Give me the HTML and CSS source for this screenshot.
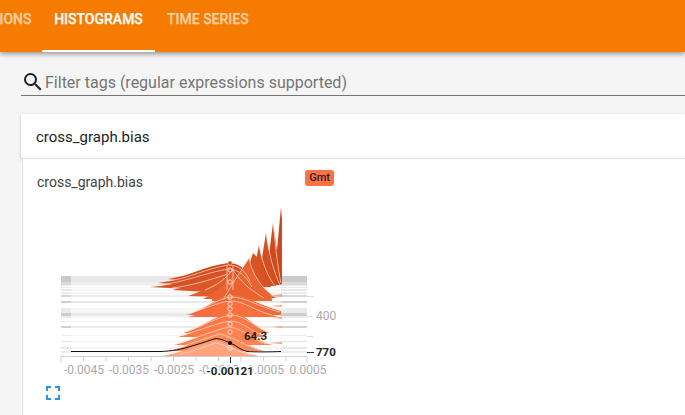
FILE: index.html
```html
<!DOCTYPE html>
<html lang="en">
<head>
<meta charset="utf-8">
<title>Histograms</title>
<link rel="stylesheet" href="styles.css">
</head>
<body>
<header class="topbar">
  <nav class="tabs">
    <span class="tab tab-cut">DISTRIBUTIONS</span>
    <span class="tab tab-active">HISTOGRAMS</span>
    <span class="tab">TIME SERIES</span>
  </nav>
</header>
<main class="content">
  <div class="search">
    <svg class="search-icon" viewBox="0 0 24 24" width="24" height="24"><path d="M15.5 14h-.79l-.28-.27A6.47 6.47 0 0 0 16 9.5 6.5 6.5 0 1 0 9.5 16c1.61 0 3.09-.59 4.23-1.57l.27.28v.79l5 4.99L20.49 19l-4.99-5zm-6 0C7.01 14 5 11.99 5 9.5S7.01 5 9.5 5 14 7.01 14 9.5 11.99 14 9.5 14z" fill="#212121"/></svg>
    <span class="search-text">Filter tags (regular expressions supported)</span>
  </div>
  <section class="category">
    <div class="category-head">cross_graph.bias</div>
    <div class="card">
      <div class="card-title">
        <span class="card-name">cross_graph.bias</span>
        <span class="badge">Gmt</span>
      </div>
      <svg class="chart" width="300" height="200" viewBox="40 200 300 200">
        <defs>
          <clipPath id="clip-mid"><rect x="71" y="270" width="210" height="90"/></clipPath>
          <clipPath id="clip-edge"><rect x="61" y="270" width="10" height="90"/><rect x="281" y="270" width="26" height="90"/></clipPath>
          <g id="rows">
            <rect x="61" y="276" width="246" height="6" opacity=".8"/>
            <rect x="61" y="282" width="246" height="3" opacity=".55"/>
            <rect x="61" y="285" width="246" height="1" opacity=".3"/>
            <rect x="61" y="287" width="246" height="1" opacity=".3"/>
            <rect x="61" y="289" width="246" height="2" opacity=".35"/>
            <rect x="61" y="292" width="246" height="2" opacity=".3"/>
            <rect x="61" y="295" width="246" height="2" opacity=".6"/>
            <rect x="61" y="301" width="246" height="2" opacity=".75"/>
            <rect x="61" y="308" width="246" height="5" opacity=".3"/>
            <rect x="61" y="313" width="246" height="3" opacity=".75"/>
            <rect x="61" y="316" width="246" height="2" opacity=".3"/>
            <rect x="61" y="321" width="246" height="1" opacity=".3"/>
            <rect x="61" y="326" width="246" height="2" opacity=".7"/>
            <rect x="61" y="335" width="246" height="1" opacity=".3"/>
            <rect x="61" y="341" width="246" height="1" opacity=".4"/>
            <rect x="61" y="347" width="246" height="2" opacity=".35"/>
            <rect x="61" y="351" width="246" height="2" opacity=".3"/>
          </g>
        </defs>
        <use href="#rows" class="rows-mid" clip-path="url(#clip-mid)"/>
        <use href="#rows" class="rows-edge" clip-path="url(#clip-edge)"/>
        <g class="ridges">
          <path fill="#cb481b" d="M274 284L277 250L281 207L282 220V284Z"/>
          <path fill="#cf4a1d" d="M265 285L269 255L273 223L277 250L281 285Z"/>
          <path fill="#d34e20" d="M257 286L262 258L266 233L270 258L276 286Z"/>
          <path fill="#d75123" d="M250 287L255 265L259 245L263 265L271 287Z"/>
          <path fill="#d95325" d="M244 287L249 265L253 253L258 258L266 287Z"/>
          <path fill="#d04a1c" d="M168 279C190 276 205 266 228 263C237 263 245 266 250 280L256 288L168 279Z"/>
          <path fill="#d34e20" d="M158 283C182 280 205 270 228 267C238 267 246 272 252 282L258 290L158 283Z"/>
          <path fill="#d75225" d="M150 287C178 285 205 275 229 271C238 272 248 280 256 288L262 293L150 287Z"/>
          <path fill="#dc5727" d="M172 290C200 285 220 278 233 272C242 278 250 285 262 295L172 290Z"/>
          <path fill="#e25c2b" d="M188 296C205 291 222 280 233 272C240 281 248 288 268 298L188 296Z"/>
          <path fill="#ea6431" d="M203 299C218 292 226 280 233 275C242 281 256 295 274 299Z"/>
          <path fill="#e9622f" d="M224 298L240 272L249 258C252 274 262 290 277 298Z"/>
          <path fill="#ed6735" d="M212 299H272V301H212Z"/>
          <path fill="#f26a39" d="M186 315C205 311 215 297 231 295C246 295 255 304 281 311V315Z"/>
          <path fill="#f86f3e" d="M188 317C208 312 218 302 231 300C246 300 256 311 278 317Z"/>
          <path fill="#fb7644" d="M183 333C202 328 214 315 232 313C246 313 254 328 270 333Z"/>
          <path fill="#fd7c4a" d="M178 337C200 332 214 321 230 319C244 319 252 332 268 337Z"/>
          <path fill="#ff8250" d="M174 345C195 341 213 328 230 325C244 326 252 340 272 345Z"/>
          <path fill="#ff8b5a" d="M168 351C190 347 203 336 220 332C234 334 245 346 264 351Z"/>
          <path fill="#ffa47c" d="M150 357C178 356 198 344 216 340C228 342 240 354 264 357Z"/>
          <path fill="#f9a184" d="M270 306L282 305V307ZM268 296L282 294V297ZM272 318L282 317V319ZM272 327L282 326V328ZM268 343L282 342V344Z"/>
        </g>
        <g class="ridge-lines">
          <path d="M168 281C190 278 205 269 228 265C238 265 245 270 250 281"/>
          <path d="M160 285C185 282 205 273 228 269C238 269 246 276 252 287"/>
          <path d="M172 288C190 286 210 280 228 274"/>
          <path d="M205 290C218 285 226 278 233 270C241 282 250 290 264 298"/>
          <path d="M224 298L240 272L249 258C252 274 262 290 277 298"/>
          <path d="M259 245C262 262 268 278 276 287M266 233C269 255 274 272 280 285M273 223C276 250 278 270 281 283"/>
          <path d="M192 312C208 307 218 299 231 297C246 297 256 306 280 312"/>
          <path d="M197 311C212 306 222 301 233 301C245 302 258 312 272 315"/>
          <path d="M188 331C204 326 216 317 232 315C246 316 254 327 268 332"/>
          <path d="M182 335C202 330 216 323 231 321C244 322 252 332 264 336"/>
          <path d="M178 343C197 338 214 330 230 327C243 329 252 339 266 344"/>
          <path d="M170 349C190 345 205 338 220 334C233 337 245 346 260 350"/>
          <path d="M180 354C196 351 206 346 216 343C226 345 238 352 252 355"/>
          <path d="M227 265V290M233 265V290"/>
        </g>
        <circle class="dot-top" cx="230" cy="263" r="2"/>
        <g class="dots">
          <circle cx="230" cy="270" r="2.2"/><circle cx="230" cy="282" r="2.2"/><circle cx="230" cy="297" r="2.2"/><circle cx="230" cy="304" r="2.2"/><circle cx="230" cy="309" r="2.2"/><circle cx="230" cy="315" r="2.2"/><circle cx="230" cy="324" r="2.2"/><circle cx="230" cy="332" r="2.2"/><circle cx="230" cy="348" r="2.2"/>
        </g>
        <path class="axis" d="M61 363V356.5H307V363M83.500 357v4M106 357v4M128.500 357v4M151 357v4M173.500 357v4M196 357v4M218.500 357v4M241 357v4M263.500 357v4M286 357v4"/>
        <path class="tick-mark" d="M307 296.500H314M307 316.500H313M307 336.500H313"/>
        <path class="tick-active" d="M307 352.500H314M230.500 357V363"/>
        <path class="hover-line" d="M71 351.500H160C172 351 180 350 195 345C203 343 210 340 216 338.500C222 339 226 341 230 343C236 345 240 350 247 351.500C255 352 270 352 281 351.500"/>
        <circle class="hover-dot" cx="230" cy="343" r="2"/>
        <text class="label" x="84" y="374" text-anchor="middle">-0.0045</text>
        <text class="label" x="129" y="374" text-anchor="middle">-0.0035</text>
        <text class="label" x="174" y="374" text-anchor="middle">-0.0025</text>
        <text class="label" x="219" y="374" text-anchor="middle">-0.0015</text>
        <text class="label" x="264" y="374" text-anchor="middle">-0.0005</text>
        <text class="label" x="308" y="374" text-anchor="middle">0.0005</text>
        <text class="label" x="316" y="320">400</text>
        <text class="hover hover-halo" x="230" y="375" text-anchor="middle">-0.00121</text>
        <text class="hover" x="244" y="340">64.3</text>
        <text class="hover" x="316" y="356">770</text>
      </svg>
      <svg class="expand" width="14" height="14" viewBox="0 0 14 14"><path d="M1 5V1H5M9 1H13V5M13 9V13H9M5 13H1V9" fill="none" stroke="#2196f3" stroke-width="2"/></svg>
    </div>
  </section>
</main>
</body>
</html>
```
FILE: styles.css
```css
html, body { margin: 0; padding: 0; height: 100%; overflow: hidden; background: #f5f5f5; font-family: Roboto, sans-serif; }
.topbar { height: 52px; background: #f57c00; box-shadow: 0 2px 5px rgba(0,0,0,.4); overflow: hidden; }
.tabs { display: flex; margin-left: -82px; height: 52px; }
.tab { box-sizing: border-box; height: 52px; padding: 0 12px; line-height: 38px; font-size: 14px; font-weight: 500; -webkit-text-stroke: .25px; color: rgba(255,255,255,.6); white-space: nowrap; width: 113px; text-align: center; }
.tab-cut { width: 124px; text-align: right; }
.tab-active { color: #fff; border-bottom: 2px solid #fff; }
.tab:last-child { width: auto; }
.content { padding: 17px 0 0 21px; }
.search { display: flex; align-items: center; height: 26px; border-bottom: 1px solid #757575; }
.search-icon { flex: none; width: 24px; height: 24px; }
.search-text { font-size: 16px; color: #757575; white-space: nowrap; }
.category { margin-top: 18px; background: #fff; }
.category-head { height: 44px; line-height: 46px; padding-left: 15px; font-size: 15px; color: #212121; background: #fff; box-shadow: 0 1px 3px rgba(0,0,0,.2); border-bottom: 1px solid #e0e0e0; }
.card { margin-left: 1px; height: 260px; background: #fff; border-left: 1px solid #e0e0e0; }
.card-title { display: flex; justify-content: space-between; width: 297px; padding: 15px 0 0 14px; height: 23px; }
.card-name { font-size: 14px; color: #424242; }
.badge { align-self: flex-start; margin-top: -4px; padding: 1px 4px 2px; height: 13px; line-height: 13px; border-radius: 3px; background: #ff7043; color: #212121; font-size: 11px; font-weight: 500; }
.chart { position: absolute; left: 40px; top: 200px; }
.rows-mid { fill: #e2e2e2; }
.rows-edge { fill: #bdbdbd; }
.ridge-lines { fill: none; stroke: #ffe0d2; stroke-width: 1; opacity: .7; }
.dot-top { fill: #c8481c; stroke: #ffd8c8; stroke-width: .5; }
.dots circle { fill: none; stroke: #ffe0d2; stroke-width: 1; }
.axis { fill: none; stroke: #d0d0d0; }
.tick-mark { fill: none; stroke: #ddd; }
.tick-active { fill: none; stroke: #333; stroke-width: 1; }
.hover-line { fill: none; stroke: #111; stroke-width: 1; }
.hover-dot { fill: #000; }
.label { font: 12px Roboto, sans-serif; fill: #aaa; }
.hover { font: 700 11.500px Roboto, sans-serif; fill: #222; }
.hover-halo { paint-order: stroke; stroke: #fff; stroke-width: 3px; }
.expand { position: absolute; left: 46px; top: 386px; }
```
